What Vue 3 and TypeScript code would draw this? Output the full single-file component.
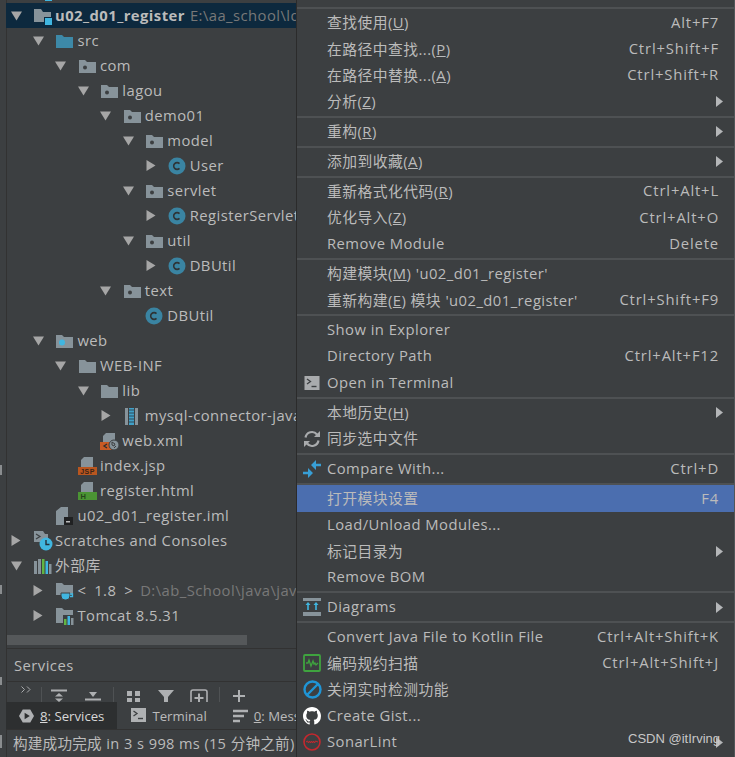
<script setup lang="ts">
type TreeIcon = 'module' | 'src' | 'pkg' | 'cls' | 'web' | 'folder' | 'jar' | 'xml' | 'jsp' | 'html' | 'iml' | 'scratch' | 'libs' | 'jdk' | 'tomcat'
interface TreeRow { d: number; arrow?: 'down' | 'right'; icon: TreeIcon; text: string; hint?: string; bold?: boolean; sel?: boolean }

const rows: TreeRow[] = [
  { d: 0, arrow: 'down', icon: 'module', text: 'u02_d01_register', hint: 'E:\\aa_school\\ld', bold: true, sel: true },
  { d: 1, arrow: 'down', icon: 'src', text: 'src' },
  { d: 2, arrow: 'down', icon: 'pkg', text: 'com' },
  { d: 3, arrow: 'down', icon: 'pkg', text: 'lagou' },
  { d: 4, arrow: 'down', icon: 'pkg', text: 'demo01' },
  { d: 5, arrow: 'down', icon: 'pkg', text: 'model' },
  { d: 6, arrow: 'right', icon: 'cls', text: 'User' },
  { d: 5, arrow: 'down', icon: 'pkg', text: 'servlet' },
  { d: 6, arrow: 'right', icon: 'cls', text: 'RegisterServlet' },
  { d: 5, arrow: 'down', icon: 'pkg', text: 'util' },
  { d: 6, arrow: 'right', icon: 'cls', text: 'DBUtil' },
  { d: 4, arrow: 'down', icon: 'pkg', text: 'text' },
  { d: 5, icon: 'cls', text: 'DBUtil' },
  { d: 1, arrow: 'down', icon: 'web', text: 'web' },
  { d: 2, arrow: 'down', icon: 'folder', text: 'WEB-INF' },
  { d: 3, arrow: 'down', icon: 'folder', text: 'lib' },
  { d: 4, arrow: 'right', icon: 'jar', text: 'mysql-connector-java-5.1.37' },
  { d: 3, icon: 'xml', text: 'web.xml' },
  { d: 2, icon: 'jsp', text: 'index.jsp' },
  { d: 2, icon: 'html', text: 'register.html' },
  { d: 1, icon: 'iml', text: 'u02_d01_register.iml' },
  { d: 0, arrow: 'right', icon: 'scratch', text: 'Scratches and Consoles' },
  { d: 0, arrow: 'down', icon: 'libs', text: '外部库' },
  { d: 1, arrow: 'right', icon: 'jdk', text: '<\u20021.8\u2002>', hint: 'D:\\ab_School\\java\\java' },
  { d: 1, arrow: 'right', icon: 'tomcat', text: 'Tomcat 8.5.31' },
]

function indent(d: number): string {
  return `${7 + d * 22.45}px`
}

const edgeMarks = [
  { top: 465, h: 10 },
  { top: 585, h: 9 },
  { top: 677, h: 8 },
  { top: 735, h: 13 },
]

type MenuIcon = 'terminal' | 'sync' | 'compare' | 'diagram' | 'scan' | 'block' | 'github' | 'sonar'
interface Item { a: string; u?: string; z?: string; key?: string; sub?: boolean; icon?: MenuIcon; active?: boolean }

const groups: Item[][] = [
  [
    { a: '查找使用(', u: 'U', z: ')', key: 'Alt+F7' },
    { a: '在路径中查找...(', u: 'P', z: ')', key: 'Ctrl+Shift+F' },
    { a: '在路径中替换...(', u: 'A', z: ')', key: 'Ctrl+Shift+R' },
    { a: '分析(', u: 'Z', z: ')', sub: true },
  ],
  [{ a: '重构(', u: 'R', z: ')', sub: true }],
  [{ a: '添加到收藏(', u: 'A', z: ')', sub: true }],
  [
    { a: '重新格式化代码(', u: 'R', z: ')', key: 'Ctrl+Alt+L' },
    { a: '优化导入(', u: 'Z', z: ')', key: 'Ctrl+Alt+O' },
    { a: 'Remove Module', key: 'Delete' },
  ],
  [
    { a: '构建模块(', u: 'M', z: ") 'u02_d01_register'" },
    { a: '重新构建(', u: 'E', z: ") 模块 'u02_d01_register'", key: 'Ctrl+Shift+F9' },
  ],
  [
    { a: 'Show in Explorer' },
    { a: 'Directory Path', key: 'Ctrl+Alt+F12' },
    { a: 'Open in Terminal', icon: 'terminal' },
  ],
  [
    { a: '本地历史(', u: 'H', z: ')', sub: true },
    { a: '同步选中文件', icon: 'sync' },
  ],
  [{ a: 'Compare With...', icon: 'compare', key: 'Ctrl+D' }],
  [
    { a: '打开模块设置', key: 'F4', active: true },
    { a: 'Load/Unload Modules...' },
    { a: '标记目录为', sub: true },
    { a: 'Remove BOM' },
  ],
  [{ a: 'Diagrams', icon: 'diagram', sub: true }],
  [
    { a: 'Convert Java File to Kotlin File', key: 'Ctrl+Alt+Shift+K' },
    { a: '编码规约扫描', icon: 'scan', key: 'Ctrl+Alt+Shift+J' },
    { a: '关闭实时检测功能', icon: 'block' },
    { a: 'Create Gist...', icon: 'github' },
    { a: 'SonarLint', icon: 'sonar', sub: true },
  ],
]
</script>

<template>
  <div class="screen">
    <aside class="left">
      <span v-for="m in edgeMarks" :key="m.top" class="edge" :style="{ top: m.top + 'px', height: m.h + 'px' }"></span>
      <div class="tree-top"><span class="sliver"></span></div>
      <div class="tree">
        <div v-for="(r, i) in rows" :key="i" class="row" :class="{ sel: r.sel }" :style="{ paddingLeft: indent(r.d) }">
          <span class="arrow-box">
            <svg v-if="r.arrow === 'down'" width="11" height="10" viewBox="0 0 11 10"><path d="M0 0.5h11L5.5 9.5z" fill="#a6a6a6" /></svg>
            <svg v-else-if="r.arrow === 'right'" width="10" height="11" viewBox="0 0 10 11"><path d="M0.5 0v11L9.5 5.5z" fill="#a6a6a6" /></svg>
          </span>
          <span class="ticon">
            <svg width="20" height="20" viewBox="0 0 20 20">
              <template v-if="r.icon === 'module'">
                <path d="M1 3h7l2 3h8v10H1z" fill="#87939a" />
                <rect x="11" y="11" width="8" height="8" fill="#0d293e" />
                <rect x="12" y="12" width="7" height="7" fill="#40b6e0" />
              </template>
              <path v-else-if="r.icon === 'src'" d="M1 4h6l2 2h9v11H1z" fill="#3d89a8" />
              <template v-else-if="r.icon === 'pkg'">
                <path d="M1 4h6l2 2h9v11H1z" fill="#87939a" />
                <circle cx="7" cy="11.5" r="2" fill="#3c3f41" />
              </template>
              <template v-else-if="r.icon === 'web'">
                <path d="M1 4h6l2 2h9v11H1z" fill="#87939a" />
                <circle cx="7" cy="11.5" r="3" fill="#40b6e0" />
              </template>
              <path v-else-if="r.icon === 'folder'" d="M1 4h6l2 2h9v11H1z" fill="#87939a" />
              <template v-else-if="r.icon === 'cls'">
                <circle cx="9" cy="10" r="8.5" fill="#3a84a2" />
                <path d="M11.5 7.6a3.4 3.4 0 1 0 0 4.8" fill="none" stroke="#2e3436" stroke-width="1.6" />
              </template>
              <template v-else-if="r.icon === 'jar'">
                <rect x="2" y="2" width="3" height="17" fill="#87939a" />
                <rect x="12" y="2" width="3" height="17" fill="#87939a" />
                <rect x="6" y="2" width="5" height="17" fill="#40a0c8" />
                <path d="M6 4h5M6 7h5M6 10h5M6 13h5M6 16h5" stroke="#2f4a58" stroke-width="1" />
              </template>
              <template v-else-if="r.icon === 'xml'">
                <path d="M6 2h9v9H3V5z" fill="#87939a" />
                <rect x="0" y="11" width="13" height="8" fill="#c75b24" />
                <path d="M7 13l-3 2 3 2" stroke="#2f2f2f" stroke-width="1.3" fill="none" />
                <circle cx="14" cy="14" r="5" fill="#87939a" stroke="#3c3f41" />
                <path d="M12 11l3 2-1 2-2-1zM14 17l2-2" stroke="#3c3f41" fill="none" />
              </template>
              <template v-else-if="r.icon === 'jsp'">
                <path d="M6 1h9v10H3V4z" fill="#87939a" />
                <rect x="0" y="11" width="19" height="8" fill="#b9561f" />
                <text x="9.5" y="17.6" text-anchor="middle" font-size="7" font-weight="700" fill="#3a2418" font-family="Liberation Sans, sans-serif">JSP</text>
              </template>
              <template v-else-if="r.icon === 'html'">
                <path d="M6 1h9v10H3V4z" fill="#87939a" />
                <rect x="0" y="11" width="19" height="8" fill="#4b9434" />
                <text x="5.5" y="18" text-anchor="middle" font-size="7.5" font-weight="700" fill="#26451c" font-family="Liberation Sans, sans-serif">H</text>
              </template>
              <template v-else-if="r.icon === 'iml'">
                <path d="M6 1h7v12h5v6H1V5z" fill="#87939a" />
                <rect x="9" y="11" width="9" height="8" fill="#202122" />
                <rect x="11" y="15" width="4" height="1.5" fill="#bbb" />
              </template>
              <template v-else-if="r.icon === 'scratch'">
                <path d="M1 0h9l2 3h3v8H1z" fill="#87939a" />
                <path d="M3 3l4 2.5L3 8" stroke="#3c3f41" stroke-width="1.2" fill="none" />
                <circle cx="13" cy="13" r="6.5" fill="#40b6e0" />
                <path d="M13 9v4.5h3.5" stroke="#24303a" stroke-width="1.4" fill="none" />
              </template>
              <template v-else-if="r.icon === 'libs'">
                <rect x="1" y="5" width="3" height="13" fill="#87939a" />
                <rect x="5" y="3" width="3" height="15" fill="#87939a" />
                <rect x="9" y="3" width="2.5" height="15" fill="#62b543" />
                <rect x="12.5" y="5" width="2.5" height="13" fill="#40b6e0" />
                <rect x="16" y="8" width="2.5" height="10" fill="#87939a" />
              </template>
              <template v-else-if="r.icon === 'jdk'">
                <path d="M1 2h6l2 2h9v10H1z" fill="#87939a" />
                <path d="M6 12h9v3a4 4 0 0 1-4 4h-1a4 4 0 0 1-4-4z" fill="#40b6e0" stroke="#3c3f41" />
                <path d="M15 13h2.5v2.5H15" stroke="#40b6e0" stroke-width="1.3" fill="none" />
              </template>
              <template v-else-if="r.icon === 'tomcat'">
                <path d="M1 2h6l2 2h9v13H1z" fill="#87939a" />
                <rect x="8" y="9" width="11" height="10" fill="#3c3f41" />
                <rect x="9" y="13" width="2.5" height="6" fill="#62b543" />
                <rect x="12.5" y="10" width="2.5" height="9" fill="#40b6e0" />
                <rect x="16" y="12" width="2.5" height="7" fill="#87939a" />
              </template>
            </svg>
          </span>
          <span class="label" :class="{ bold: r.bold }">{{ r.text }}</span>
          <span v-if="r.hint" class="hint">{{ r.hint }}</span>
        </div>
      </div>
      <div class="hscroll"><span class="thumb"></span></div>
      <div class="services">
        <div class="services-title">Services</div>
        <div class="toolbar">
          <span class="chev">
            <svg width="10" height="7" viewBox="0 0 10 7"><path d="M0.5 0.5l3 3-3 3M6 0.5l3 3-3 3" fill="none" stroke="#a9abad" stroke-width="1" /></svg>
          </span>
          <span class="vsep"></span>
          <svg class="tool" width="18" height="18" viewBox="0 0 18 18"><path d="M1 1.5h16M1 15.5h16" stroke="#aeb0b2" stroke-width="2" /><path d="M9 4l4 3.5H5zM9 13l4-3.5H5z" fill="#aeb0b2" /></svg>
          <svg class="tool" width="18" height="18" viewBox="0 0 18 18"><path d="M1 10.5h16M1 15.5h16" stroke="#aeb0b2" stroke-width="2" /><path d="M9 8L5 3h8z" fill="#aeb0b2" /></svg>
          <span class="vsep mid"></span>
          <svg class="tool" width="16" height="16" viewBox="0 0 16 16"><path d="M1 2h5v5H1zM9 2h5v5H9zM1 9h5v5H1zM9 9h5v5H9z" fill="#aeb0b2" /></svg>
          <svg class="tool" width="16" height="16" viewBox="0 0 16 16"><path d="M0 1h16L10 8v8H6V8z" fill="#aeb0b2" /></svg>
          <svg class="tool" width="18" height="18" viewBox="0 0 18 18"><rect x="1" y="1" width="16" height="16" rx="2" fill="none" stroke="#aeb0b2" stroke-width="1.6" /><path d="M9 4.5v9M4.5 9h9" stroke="#aeb0b2" stroke-width="2" /></svg>
          <span class="vsep mid"></span>
          <svg class="tool" width="14" height="14" viewBox="0 0 14 14"><path d="M7 1v12M1 7h12" stroke="#aeb0b2" stroke-width="2" /></svg>
        </div>
      </div>
      <div class="tabs">
        <div class="tab on">
          <svg width="15" height="16" viewBox="0 0 16 16"><path d="M4 1h8l4 7-4 7H4L0 8z" fill="#afb1b3" /><path d="M6 4.5l5.5 3.5L6 11.5z" fill="#2d2f30" /></svg>
          <span><u>8</u>: Services</span>
        </div>
        <div class="tab second">
          <svg width="15" height="15" viewBox="0 0 15 15"><rect width="15" height="14" fill="#afb1b3" /><path d="M2.5 3l3.5 2.5L2.5 8" stroke="#3c3f41" stroke-width="1.3" fill="none" /><path d="M7 10.5h5" stroke="#3c3f41" stroke-width="1.4" /></svg>
          <span>Terminal</span>
        </div>
        <div class="tab">
          <svg width="15" height="14" viewBox="0 0 15 14"><path d="M0 2h15M0 7h11M0 12h7" stroke="#afb1b3" stroke-width="2.4" /></svg>
          <span><u>0</u>: Messages</span>
        </div>
      </div>
      <div class="status">构建成功完成 in 3 s 998 ms (15 分钟之前)</div>
    </aside>

    <section class="menu">
      <div class="menu-cut"></div>
      <div v-for="(g, gi) in groups" :key="gi" class="group">
        <div v-for="(it, ii) in g" :key="ii" class="item" :class="{ active: it.active }">
          <span class="micon">
            <svg v-if="it.icon === 'terminal'" width="16" height="16" viewBox="0 0 16 16"><rect x="0.5" y="1" width="15" height="14" fill="#a9abad" /><path d="M3 4l3.5 2.5L3 9" stroke="#3c3f41" stroke-width="1.3" fill="none" /><path d="M7.5 11.5h5" stroke="#3c3f41" stroke-width="1.4" /></svg>
            <svg v-else-if="it.icon === 'sync'" width="18" height="18" viewBox="0 0 18 18"><path d="M2.5 7.5A6.5 6.5 0 0 1 14 4.5" fill="none" stroke="#a9abad" stroke-width="2.2" /><path d="M11 7h6V1z" fill="#a9abad" /><path d="M15.5 10.5A6.5 6.5 0 0 1 4 13.5" fill="none" stroke="#a9abad" stroke-width="2.2" /><path d="M7 11H1v6z" fill="#a9abad" /></svg>
            <svg v-else-if="it.icon === 'compare'" width="18" height="18" viewBox="0 0 18 18"><path d="M18 5h-6M0 13h6" stroke="#389fd6" stroke-width="2.4" /><path d="M13 0v10L8 5zM5 8v10l5-5z" fill="#389fd6" /></svg>
            <svg v-else-if="it.icon === 'diagram'" width="18" height="18" viewBox="0 0 18 18"><rect y="0" width="18" height="3" fill="#87939a" /><rect y="14" width="18" height="4" fill="#87939a" /><path d="M5 12V6M13 12V6" stroke="#40b6e0" stroke-width="1.6" /><path d="M5 4l2.5 3h-5zM13 4l2.5 3h-5z" fill="#40b6e0" /></svg>
            <svg v-else-if="it.icon === 'scan'" width="18" height="18" viewBox="0 0 18 18"><rect x="1" y="1" width="16" height="16" rx="1" fill="none" stroke="#3fa33f" stroke-width="1.8" /><path d="M3 9h2l1-3 2 6 2-5 1 3 1-1 1 2 2-2" fill="none" stroke="#3fa33f" stroke-width="1.3" /></svg>
            <svg v-else-if="it.icon === 'block'" width="19" height="19" viewBox="0 0 19 19"><circle cx="9.5" cy="9.5" r="8" fill="none" stroke="#1f95d6" stroke-width="2.4" /><path d="M4 15L15 4" stroke="#1f95d6" stroke-width="2.4" /></svg>
            <svg v-else-if="it.icon === 'github'" width="18" height="18" viewBox="0 0 16 16"><path fill="#fff" d="M8 0C3.58 0 0 3.58 0 8c0 3.54 2.29 6.53 5.47 7.59.4.07.55-.17.55-.38 0-.19-.01-.82-.01-1.49-2.01.37-2.53-.49-2.69-.94-.09-.23-.48-.94-.82-1.13-.28-.15-.68-.52-.01-.53.63-.01 1.08.58 1.23.82.72 1.21 1.87.87 2.33.66.07-.52.28-.87.51-1.07-1.78-.2-3.64-.89-3.64-3.95 0-.87.31-1.59.82-2.15-.08-.2-.36-1.02.08-2.12 0 0 .67-.21 2.2.82.64-.18 1.32-.27 2-.27s1.36.09 2 .27c1.53-1.04 2.2-.82 2.2-.82.44 1.1.16 1.92.08 2.12.51.56.82 1.27.82 2.15 0 3.07-1.87 3.75-3.65 3.95.29.25.54.73.54 1.48 0 1.07-.01 1.93-.01 2.2 0 .21.15.46.55.38A8.01 8.01 0 0 0 16 8c0-4.42-3.58-8-8-8z" /></svg>
            <svg v-else-if="it.icon === 'sonar'" width="18" height="18" viewBox="0 0 18 18"><circle cx="9" cy="9" r="8" fill="none" stroke="#c4282e" stroke-width="1.6" /><path d="M3 9l1.5-1 1 2 1-2 1 2 1-2 1 2 1-2 1 2 1-2L15 9" fill="none" stroke="#c4282e" stroke-width="1" /></svg>
          </span>
          <span class="mtext">{{ it.a }}<u v-if="it.u">{{ it.u }}</u>{{ it.z }}</span>
          <span v-if="it.key" class="mkey">{{ it.key }}</span>
          <svg v-if="it.sub" class="subarrow" width="7" height="11" viewBox="0 0 7 11"><path d="M0 0v11l7-5.5z" fill="#b4b6b8" /></svg>
        </div>
      </div>
      <div class="mark">CSDN @itIrving</div>
    </section>
  </div>
</template>

<style>
html, body { margin: 0; background: #3c3f41; }
</style>

<style scoped>
.screen {
  display: flex;
  width: 735px;
  height: 757px;
  overflow: hidden;
  background: #3c3f41;
  color: #bbbbbb;
  font-family: "Open Sans", "Noto Sans CJK SC", sans-serif;
  font-size: 14.8px;
  letter-spacing: 0.45px;
}
.left {
  width: 296px;
  flex: none;
  display: flex;
  flex-direction: column;
  overflow: hidden;
  position: relative;
  background: linear-gradient(90deg, #3c3f41 6px, #323232 6px, #323232 7px, #3c3f41 7px);
}
.edge { position: absolute; left: 0; width: 2px; background: #8a8d8f; }
.tree-top { height: 3px; flex: none; }
.sliver { display: block; width: 7px; height: 1px; margin-left: 45px; background: #40b6e0; }
.tree { flex: none; height: 625px; }
.row {
  height: 25px;
  display: flex;
  align-items: center;
  box-sizing: border-box;
  white-space: nowrap;
  overflow: hidden;
}
.row.sel { background: linear-gradient(90deg, transparent 6px, #0d293e 6px); }
.arrow-box { width: 18px; flex: none; display: flex; justify-content: center; align-items: center; }
.ticon { width: 22px; margin-left: 8px; flex: none; display: flex; align-items: center; }
.label { flex: none; margin-bottom: 2px; }
.bold { font-weight: 700; }
.hint { margin-left: 7px; margin-bottom: 2px; color: #787878; flex: none; }
.bold + .hint { margin-left: 5px; }
.hscroll { height: 10px; margin-top: 7px; flex: none; padding-left: 7px; }
.thumb { display: block; width: 240px; height: 10px; background: #55585a; }
.services { height: 54px; flex: none; margin-top: 3px; margin-left: 7px; border-top: 1px solid #323232; overflow: hidden; box-sizing: border-box; }
.services-title { height: 32px; line-height: 33px; padding-left: 7px; border-bottom: 1px solid #323232; }
.toolbar { display: flex; align-items: flex-start; padding-top: 5px; height: 30px; box-sizing: border-box; }
.chev { width: 34px; padding-left: 14px; box-sizing: border-box; flex: none; display: flex; margin-top: -1px; }
.vsep { width: 1px; height: 20px; background: #4f5254; flex: none; }
.vsep.mid { margin: 0 4px 0 3px; }
.tool { flex: none; margin: 2px 8px 0; }
.tabs { height: 27px; flex: none; margin-left: 6px; display: flex; align-items: stretch; white-space: nowrap; border-bottom: 1px solid #323232; }
.tab { display: flex; align-items: center; gap: 6px; padding: 0 13px; font-size: 13.2px; letter-spacing: 0; flex: none; }
.tab.on { background: #2d2f30; color: #d8d8d8; }
.tab.second { padding-left: 14px; }
.status { height: 25px; line-height: 26px; flex: none; padding-left: 13px; white-space: nowrap; font-size: 14.6px; letter-spacing: 0.2px; word-spacing: 0.6px; }
.menu {
  flex: none;
  width: 439px;
  height: 757px;
  border-left: 1px solid #2b2b2b;
  border-right: 1px solid #515658;
  box-sizing: border-box;
  position: relative;
  overflow: hidden;
}
.menu-cut { height: 6px; }
.group { padding-top: 3.7px; position: relative; }
.group::before { content: ""; position: absolute; left: 0; right: 0; top: 1px; height: 2px; background: #4e5153; }
.item {
  height: 26.25px;
  display: flex;
  align-items: center;
  position: relative;
  padding-right: 15px;
  white-space: nowrap;
}
.item.active { background: #4b6eaf; }
.micon { width: 30px; flex: none; display: flex; justify-content: center; align-items: center; }
.mtext { flex: 1; margin-bottom: 2px; }
.mkey { flex: none; letter-spacing: 0.85px; margin-bottom: 2px; }
.subarrow { position: absolute; right: 11px; top: 8px; }
.mark { position: absolute; right: 14px; bottom: 11px; font-family: "Liberation Sans", sans-serif; font-size: 13px; letter-spacing: 0; color: #c8c8c8; }
</style>
